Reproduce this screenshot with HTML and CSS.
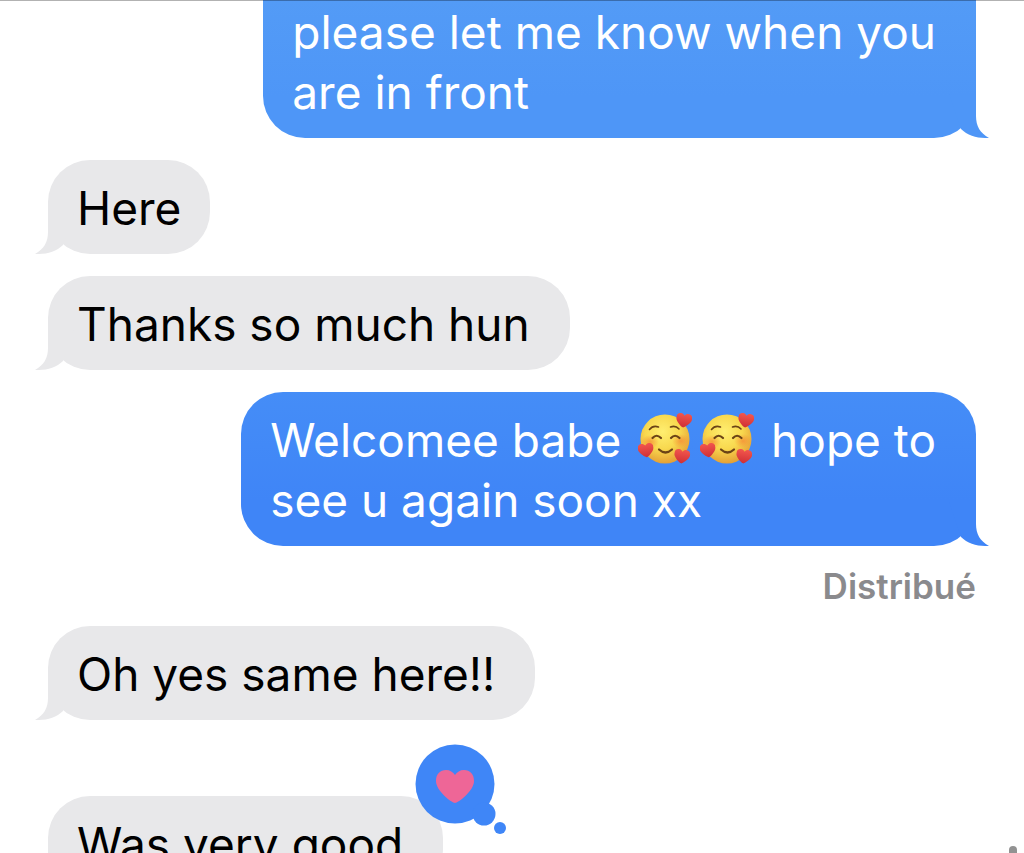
FILE: index.html
```html
<!DOCTYPE html>
<html lang="fr">
<head>
    <meta charset="UTF-8">
    <meta name="viewport" content="width=device-width, initial-scale=1.0">
    <title>Messages</title>
    <link rel="stylesheet" href="styles.css">
</head>
<body>
    <!-- shared shapes -->
    <svg class="defs" aria-hidden="true">
        <defs>
            <radialGradient id="skin" cx="45%" cy="35%" r="65%">
                <stop offset="0" stop-color="#ffee70"/>
                <stop offset="0.55" stop-color="#f8d84e"/>
                <stop offset="1" stop-color="#e5a036"/>
            </radialGradient>
            <radialGradient id="blush">
                <stop offset="0" stop-color="#f58a35" stop-opacity="0.75"/>
                <stop offset="1" stop-color="#f58a35" stop-opacity="0"/>
            </radialGradient>
            <linearGradient id="red" x1="0" y1="0" x2="0" y2="1">
                <stop offset="0" stop-color="#f2564d"/>
                <stop offset="1" stop-color="#cf2f35"/>
            </linearGradient>
            <symbol id="tail" viewBox="0 0 40 44">
                <path d="M27 0V22C27 32 31 39 40 44H36C27 44 18 41 12 35L0 0Z"/>
            </symbol>
            <symbol id="heart" viewBox="0 0 38 33">
                <path d="M19 33C16 33 0 21 0 11C0 4 4 0 10 0C14 0 17 2 19 5C21 2 24 0 28 0C34 0 38 4 38 11C38 21 22 33 19 33Z"/>
            </symbol>
            <symbol id="love-face" viewBox="0 0 54 54">
                <circle cx="27" cy="27" r="24.5" fill="url(#skin)"/>
                <ellipse cx="12" cy="30" rx="9" ry="7" fill="url(#blush)"/>
                <ellipse cx="43" cy="29" rx="9" ry="7" fill="url(#blush)"/>
                <g fill="none" stroke="#6b4316" stroke-linecap="round">
                    <path stroke-width="1.6" d="M11.500 17.500Q15 13 20.500 15M32.500 15Q37.500 13 41 17"/>
                    <path stroke-width="2.2" d="M14.500 26Q18.500 21.500 23 26M33 26Q37 21.500 41.500 26"/>
                    <path stroke-width="2.2" d="M21 37.500Q27.500 43.500 34 37.500"/>
                </g>
                <g fill="url(#red)">
                    <use href="#heart" x="38" y="1" width="16" height="15" transform="rotate(8 46 8)"/>
                    <use href="#heart" x="0" y="31" width="16" height="15" transform="rotate(-8 7 39)"/>
                    <use href="#heart" x="36" y="37" width="16" height="15" transform="rotate(8 44 44)"/>
                </g>
            </symbol>
        </defs>
    </svg>

    <main class="thread">
        <div class="message sent continued">
            please let me know when you<br>are in front
            <svg class="tail" aria-hidden="true"><use href="#tail"/></svg>
        </div>
        <div class="message received short">
            Here
            <svg class="tail" aria-hidden="true"><use href="#tail"/></svg>
        </div>
        <div class="message received">
            Thanks so much hun
            <svg class="tail" aria-hidden="true"><use href="#tail"/></svg>
        </div>
        <div class="message sent recent">
            Welcomee babe <span class="emojis"><svg class="emoji" role="img" aria-label="Smiling face with hearts"><use href="#love-face"/></svg><svg class="emoji" role="img" aria-label="Smiling face with hearts"><use href="#love-face"/></svg></span> hope to<br>see u again soon xx
            <svg class="tail" aria-hidden="true"><use href="#tail"/></svg>
        </div>
        <p class="status">Distribué</p>
        <div class="message received">
            Oh yes same here!!
            <svg class="tail" aria-hidden="true"><use href="#tail"/></svg>
        </div>
        <div class="message received reacted">
            Was very good
            <svg class="tail" aria-hidden="true"><use href="#tail"/></svg>
            <svg class="reaction" viewBox="0 0 94 94" role="img" aria-label="Loved">
                <g fill="#3f86f7">
                    <circle cx="40" cy="40" r="39.500"/>
                    <circle cx="69" cy="70" r="11.500"/>
                    <circle cx="85" cy="84" r="6"/>
                </g>
                <use href="#heart" x="21" y="26" width="38" height="33" fill="#ee6697"/>
            </svg>
        </div>
    </main>
    <div class="scrollbar"></div>
</body>
</html>
```
FILE: styles.css
```css
* {
    box-sizing: border-box;
}
body {
    margin: 0;
    background: #fff;
    font-family: Inter, "Liberation Sans", sans-serif;
}
.defs {
    position: absolute;
    width: 0;
    height: 0;
}
.thread {
    display: flex;
    flex-direction: column;
    align-items: flex-start;
    gap: 22px;
    height: 100vh;
    padding: 0 48px;
    overflow: hidden;
}
/* hairline under the header */
.thread::before {
    content: "";
    position: absolute;
    top: 0;
    left: 0;
    right: 0;
    z-index: 1;
    height: 1px;
    background: rgba(0, 0, 0, 0.3);
}
.message {
    position: relative;
    flex: none;
    padding: 18px 40px 16px 29px;
    border-radius: 42px;
    font-size: 46px;
    line-height: 60px;
    white-space: nowrap;
}
.short {
    padding-right: 29px;
}
.received {
    background: #e8e8ea;
    color: #000;
    fill: #e8e8ea;
}
.sent {
    align-self: flex-end;
    background: linear-gradient(#539bf6, #4e96f7 70%);
    color: #fff;
    fill: #4e96f7;
}
.recent {
    background: linear-gradient(#458df7, #3f85f7 70%);
    fill: #3f85f7;
}
/* bubble that is scrolled partly out of view */
.continued {
    padding-top: 2px;
    border-top-left-radius: 0;
    border-top-right-radius: 0;
}
.tail {
    position: absolute;
    right: -13px;
    bottom: 0;
    width: 40px;
    height: 44px;
}
.received .tail {
    right: auto;
    left: -13px;
    transform: scaleX(-1);
}
.emojis {
    display: inline-flex;
    gap: 8px;
    margin: 0 4px;
    vertical-align: -9px;
}
.emoji {
    width: 54px;
    height: 54px;
}
.status {
    margin: 0;
    align-self: flex-end;
    color: #8a8a8d;
    font-size: 35px;
    font-weight: 600;
    line-height: 36px;
}
.reacted {
    margin-top: 54px;
}
.reaction {
    position: absolute;
    top: -52px;
    right: -66px;
    width: 94px;
    height: 94px;
}
.scrollbar {
    position: fixed;
    right: 7px;
    bottom: 0;
    width: 8px;
    height: 7px;
    border-radius: 4px 4px 0 0;
    background: #929292;
}
```
